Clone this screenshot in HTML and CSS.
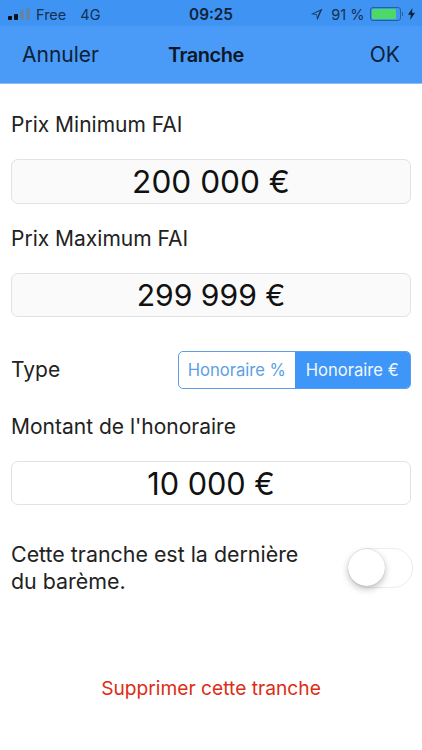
FILE: index.html
```html
<!DOCTYPE html>
<html lang="fr">
<head>
    <meta charset="UTF-8">
    <meta name="viewport" content="width=device-width, initial-scale=1.0">
    <title>Tranche</title>
    <link rel="stylesheet" href="styles.css">
</head>
<body>
    <div class="status-bar">
        <div class="status-side">
            <div class="signal">
                <span class="dot on"></span>
                <span class="dot on h2"></span>
                <span class="dot h3"></span>
                <span class="dot h4"></span>
            </div>
            <span class="carrier">Free</span>
            <span class="network">4G</span>
        </div>
        <div class="clock">09:25</div>
        <div class="status-side right">
            <svg class="location" width="13" height="13" viewBox="0 0 13 13"><path d="M12.5 .8 .8 6.2 6.2 6.8 7.2 12.2Z M10 3 7 9.6 6.8 6.2 3.6 5.8Z" fill="#14304f" fill-rule="evenodd"/></svg>
            <span class="percent">91 %</span>
            <div class="battery"><div class="battery-level"></div></div>
            <div class="battery-cap"></div>
            <svg class="bolt" width="7" height="12" viewBox="0 0 7 12"><path d="M4.4 0 0 6.8H2.8L2.2 12 7 4.8H4Z" fill="#0f2238"/></svg>
        </div>
    </div>

    <div class="nav-bar">
        <span class="nav-button">Annuler</span>
        <span class="nav-title">Tranche</span>
        <span class="nav-button">OK</span>
    </div>

    <div class="content">
        <div class="label first">Prix Minimum FAI</div>
        <div class="field grey big">200 000 €</div>
        <div class="label second">Prix Maximum FAI</div>
        <div class="field grey mid">299 999 €</div>

        <div class="type-row">
            <span class="row-label">Type</span>
            <div class="segments">
                <div class="segment">Honoraire %</div>
                <div class="segment active">Honoraire €</div>
            </div>
        </div>

        <div class="label third">Montant de l'honoraire</div>
        <div class="field white">10 000 €</div>

        <div class="last-row">
            <div class="last-text">Cette tranche est la dernière<br>du barème.</div>
            <div class="switch"><div class="knob"></div></div>
        </div>

        <div class="delete">Supprimer cette tranche</div>
    </div>
</body>
</html>
```

FILE: styles.css
```css
body {
    margin: 0;
    width: 422px;
    height: 750px;
    overflow: hidden;
    background-color: #fff;
    font-family: 'Inter', 'Liberation Sans', sans-serif;
    color: #111;
}
.status-bar {
    height: 26px;
    background-color: #3f94f3;
    display: flex;
    align-items: center;
    justify-content: space-between;
    padding: 2px 7px 0 8px;
    box-sizing: border-box;
    font-size: 14.5px;
    color: #14304f;
    position: relative;
}
.status-side {
    display: flex;
    align-items: center;
}
.signal {
    display: flex;
    align-items: flex-end;
    gap: 2px;
    height: 12px;
    margin-right: 6px;
}
.dot {
    width: 4px;
    height: 4px;
    background-color: #5f86ad;
    border-radius: 1px;
}
.dot.on {
    background-color: #111;
}
.h2 { height: 6px; }
.h3 { height: 10px; }
.h4 { height: 12px; }
.network {
    margin-left: 14px;
}
.clock {
    position: absolute;
    left: 0;
    right: 0;
    top: 5px;
    text-align: center;
    font-size: 15.3px;
    font-weight: 600;
    color: #10233a;
}
.location {
    margin-right: 8px;
}
.percent {
    margin-right: 5px;
}
.battery {
    width: 27px;
    height: 10px;
    border: 1px solid #23619f;
    border-radius: 3px;
    padding: 1px;
    box-sizing: content-box;
}
.battery-level {
    width: 90%;
    height: 100%;
    background-color: #4cd964;
    border-radius: 1px;
}
.battery-cap {
    width: 1.5px;
    height: 4px;
    background-color: #23619f;
    margin: 0 5px 0 1px;
}
.nav-bar {
    height: 58px;
    background-color: #4a9bf8;
    border-bottom: 1px solid #8cbff5;
    box-sizing: border-box;
    display: flex;
    align-items: center;
    justify-content: space-between;
    padding: 0 22px 0 22px;
    font-size: 21px;
}
.nav-button {
    color: #0e2137;
}
.nav-title {
    font-weight: 600;
    font-size: 20px;
    letter-spacing: -0.5px;
    color: #0c1826;
    margin-right: 57px;
}
.content {
    padding: 0 11px;
}
.label {
    font-size: 21px;
    line-height: 24px;
    color: #222;
}
.label.first {
    margin-top: 29px;
    margin-bottom: -1px;
}
.label.second {
    margin-top: 23px;
    margin-bottom: -1px;
}
.label.third {
    margin-top: 26px;
    margin-bottom: -1px;
}
.field {
    height: 44px;
    margin-top: 23px;
    border: 1px solid #e2e2e2;
    border-radius: 7px;
    box-sizing: border-box;
    display: flex;
    align-items: center;
    justify-content: center;
    font-size: 30.7px;
    color: #111;
}
.field.grey {
    background-color: #fafafa;
}
.field.big {
    height: 45px;
    font-size: 31.6px;
}
.field.mid {
    font-size: 30.1px;
}
.field.white {
    background-color: #fff;
}
.type-row {
    margin-top: 33px;
    display: flex;
    align-items: center;
    justify-content: space-between;
    height: 39px;
}
.row-label {
    font-size: 21px;
    color: #222;
}
.segments {
    display: flex;
    width: 233px;
    height: 38px;
    border: 1px solid #5c9fe6;
    border-radius: 5px;
    box-sizing: border-box;
    overflow: hidden;
    font-size: 16.6px;
}
.segment {
    flex: 1;
    display: flex;
    align-items: center;
    justify-content: center;
    color: #5c9fe6;
}
.segment.active {
    background-color: #3d96f8;
    color: #f2f7fd;
}
.last-row {
    margin-top: 36px;
    display: flex;
    align-items: center;
    justify-content: space-between;
}
.last-text {
    font-size: 21.4px;
    line-height: 27px;
    color: #222;
}
.switch {
    width: 65px;
    height: 40px;
    border: 1.5px solid #ececec;
    border-radius: 20px;
    box-sizing: border-box;
    margin-right: -2px;
    background-color: #fff;
}
.knob {
    width: 37px;
    height: 37px;
    margin-left: -1px;
    background-color: #fff;
    border-radius: 50%;
    box-shadow: 0 3px 7px rgba(0, 0, 0, 0.25), 0 0 1px rgba(0, 0, 0, 0.25);
}
.delete {
    margin-top: 81px;
    text-align: center;
    font-size: 19.2px;
    color: #dd2c14;
}
```
